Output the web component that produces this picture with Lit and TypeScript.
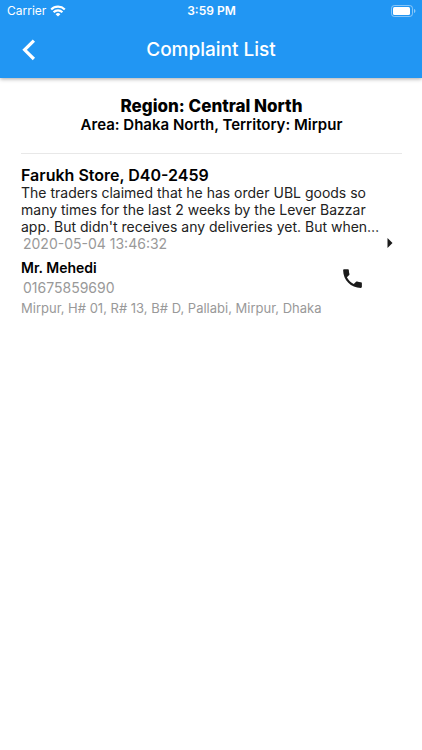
import { LitElement, html, css } from "lit";
import { customElement, property } from "lit/decorators.js";

interface Complaint {
  store: string;
  text: string;
  time: string;
  name: string;
  phone: string;
  address: string;
}

const complaint: Complaint = {
  store: "Farukh Store, D40-2459",
  text: "The traders claimed that he has order UBL goods so many times for the last 2 weeks by the Lever Bazzar app. But didn't receives any deliveries yet. But when…",
  time: "2020-05-04 13:46:32",
  name: "Mr. Mehedi",
  phone: "01675859690",
  address: "Mirpur, H# 01, R# 13, B# D, Pallabi, Mirpur, Dhaka",
};

@customElement("status-bar")
export class StatusBar extends LitElement {
  static styles = css`
    :host {
      display: grid;
      grid-template-columns: 1fr auto 1fr;
      align-items: center;
      height: 22px;
      padding: 0 6px 0 7px;
      font-size: 12px;
      line-height: 16px;
    }
    .carrier {
      display: flex;
      align-items: center;
      gap: 4px;
    }
    .time {
      font-weight: 600;
    }
    .battery {
      justify-self: end;
    }
    svg {
      display: block;
    }
  `;

  render() {
    return html`
      <span class="carrier">
        Carrier
        <svg width="16" height="12" viewBox="0 0 16 12" fill="none" stroke="#fff" stroke-width="2.2" aria-hidden="true">
          <path d="M1.2 4.5a9.7 9.7 0 0 1 13.6 0" />
          <path d="M3.6 7.3a6.2 6.2 0 0 1 8.8 0" />
          <path d="M8 11.6 5.6 9.2a3.3 3.3 0 0 1 4.8 0z" fill="#fff" stroke="none" />
        </svg>
      </span>
      <span class="time">3:59 PM</span>
      <svg class="battery" width="25" height="12" viewBox="0 0 25 12" aria-hidden="true">
        <rect x=".5" y=".5" width="21" height="11" rx="2.8" fill="none" stroke="#fff" stroke-opacity=".45" />
        <rect x="2" y="2" width="17" height="8" rx="1.5" fill="#fff" />
        <path d="M23 4v4c.9-.3 1.4-1.1 1.4-2s-.5-1.7-1.4-2z" fill="#fff" fill-opacity=".5" />
      </svg>
    `;
  }
}

@customElement("complaint-card")
export class ComplaintCard extends LitElement {
  @property({ attribute: false }) item!: Complaint;

  static styles = css`
    :host {
      display: block;
    }
    h3,
    h4,
    p {
      margin: 0;
    }
    .store {
      font-size: 16px;
      line-height: 18px;
      font-weight: 600;
      color: #000;
    }
    .text {
      padding-right: 16px;
      font-size: 14px;
      line-height: 17px;
      color: #222;
    }
    .row {
      display: flex;
      align-items: center;
      justify-content: space-between;
    }
    .time,
    .phone {
      padding-left: 2px;
      font-size: 14px;
      color: #999;
    }
    .time {
      line-height: 18px;
    }
    .more {
      flex: none;
      width: 24px;
      height: 16px;
      border: 0;
      padding: 0 0 3px;
      background: none;
      color: #1b1b1b;
      cursor: pointer;
    }
    .contact {
      padding: 5px 37px 0 0;
    }
    .call {
      color: #1b1b1b;
    }
    .name {
      font-size: 14px;
      line-height: 20px;
      font-weight: 600;
      color: #000;
    }
    .phone {
      line-height: 20px;
    }
    .address {
      font-size: 13px;
      line-height: 20px;
      color: #999;
    }
    svg {
      display: block;
      margin: 0 auto;
    }
  `;

  render() {
    const c = this.item;
    return html`
      <h3 class="store">${c.store}</h3>
      <p class="text">${c.text}</p>
      <div class="row">
        <p class="time">${c.time}</p>
        <button class="more" aria-label="Show details">
          <svg width="6" height="10" viewBox="0 0 6 10" fill="currentColor"><path d="M.5 0 5.5 5 .5 10z" /></svg>
        </button>
      </div>
      <div class="row contact">
        <div>
          <h4 class="name">${c.name}</h4>
          <p class="phone">${c.phone}</p>
        </div>
        <a class="call" href="tel:${c.phone}" aria-label="Call ${c.name}">
          <svg width="25" height="25" viewBox="0 0 24 24" fill="currentColor">
            <path d="M6.62 10.79c1.44 2.83 3.76 5.14 6.59 6.59l2.2-2.2c.27-.27.67-.36 1.02-.24 1.12.37 2.33.57 3.57.57.55 0 1 .45 1 1V20c0 .55-.45 1-1 1-9.39 0-17-7.61-17-17 0-.55.45-1 1-1h3.5c.55 0 1 .45 1 1 0 1.25.2 2.45.57 3.57.11.35.03.74-.25 1.02l-2.2 2.2z" />
          </svg>
        </a>
      </div>
      <p class="address">${c.address}</p>
    `;
  }
}

@customElement("app-root")
export class AppRoot extends LitElement {
  static styles = css`
    :host {
      display: block;
      min-height: 100vh;
      background: #fff;
      font-family: Inter, "Liberation Sans", sans-serif;
    }
    .header {
      background: #2196f3;
      color: #fff;
      box-shadow: 0 1px 4px rgba(0, 0, 0, 0.35);
    }
    .toolbar {
      display: grid;
      grid-template-columns: 56px 1fr 56px;
      align-items: center;
      height: 56px;
    }
    .back {
      height: 48px;
      border: 0;
      padding: 0;
      background: none;
      color: inherit;
      cursor: pointer;
    }
    .back svg {
      display: block;
      margin: 0 auto;
    }
    h1,
    h2,
    p {
      margin: 0;
    }
    .title {
      font-size: 19px;
      line-height: 24px;
      font-weight: 500;
      text-align: center;
    }
    main {
      padding: 18px 20px 18px 21px;
    }
    .place {
      padding-bottom: 20px;
      border-bottom: 1px solid #e8e8e8;
      margin-bottom: 12px;
      color: #000;
      text-align: center;
    }
    .region {
      font-size: 17px;
      line-height: 20px;
      font-weight: 800;
    }
    .area {
      font-size: 15px;
      line-height: 17px;
      font-weight: 600;
    }
  `;

  render() {
    return html`
      <header class="header">
        <status-bar></status-bar>
        <div class="toolbar">
          <button class="back" aria-label="Back">
            <svg width="16" height="22" viewBox="0 0 16 22" fill="none" stroke="currentColor" stroke-width="3.2">
              <path d="M13.9 1.6 4.6 10.800l9.300 9.200" />
            </svg>
          </button>
          <h1 class="title">Complaint List</h1>
        </div>
      </header>
      <main>
        <section class="place">
          <h2 class="region">Region: Central North</h2>
          <p class="area">Area: Dhaka North, Territory: Mirpur</p>
        </section>
        <complaint-card .item=${complaint}></complaint-card>
      </main>
    `;
  }
}
